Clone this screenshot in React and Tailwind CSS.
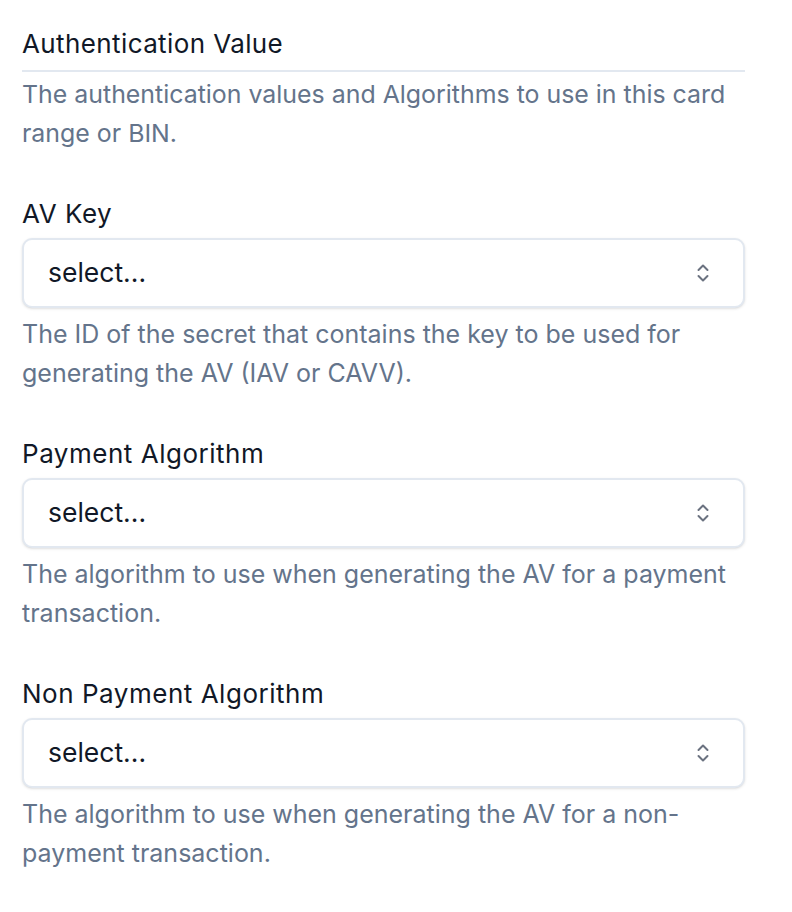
import React from "react";

function Chevrons() {
  return (
    <svg width="16" height="24" viewBox="0 0 16 24" fill="none" stroke="#6b7280" strokeWidth="2" strokeLinecap="round" strokeLinejoin="round">
      <path d="M3.5 9 L8 4.5 L12.5 9" />
      <path d="M3.5 15 L8 19.5 L12.5 15" />
    </svg>
  );
}

function Field({ label, desc }) {
  return (
    <div className="flex flex-col">
      <div className="text-[26px] tracking-[0.02em] leading-[36px] text-[#111827]">{label}</div>
      <div className="mt-[6px] h-[70px] rounded-[10px] border-2 border-[#e2e8f0] bg-white shadow-sm flex items-center justify-between pl-[24px] pr-[32px]">
        <span className="text-[26.5px] text-[#111827]">select...</span>
        <Chevrons />
      </div>
      <p className="mt-[7px] text-[25px] leading-[39px] text-[#64748b]">{desc}</p>
    </div>
  );
}

export default function App() {
  return (
    <div className="min-h-[912px] bg-white" style={{ fontFamily: "Inter, 'Noto Sans', sans-serif" }}>
      <div className="w-[723px] ml-[22px] pt-[26px] flex flex-col">
        <div className="text-[26px] tracking-[0.015em] leading-[36px] text-[#111827] pb-[8px] border-b-2 border-[#e2e8f0]">Authentication Value</div>
        <p className="mt-[3px] text-[24.9px] leading-[39px] text-[#64748b]">
          The authentication values and Algorithms to use in this card range or BIN.
        </p>
        <div className="mt-[43px] flex flex-col gap-[43px]">
          <Field label="AV Key" desc="The ID of the secret that contains the key to be used for generating the AV (IAV or CAVV)." />
          <Field label="Payment Algorithm" desc="The algorithm to use when generating the AV for a payment transaction." />
          <Field label="Non Payment Algorithm" desc="The algorithm to use when generating the AV for a non-payment transaction." />
        </div>
      </div>
    </div>
  );
}
